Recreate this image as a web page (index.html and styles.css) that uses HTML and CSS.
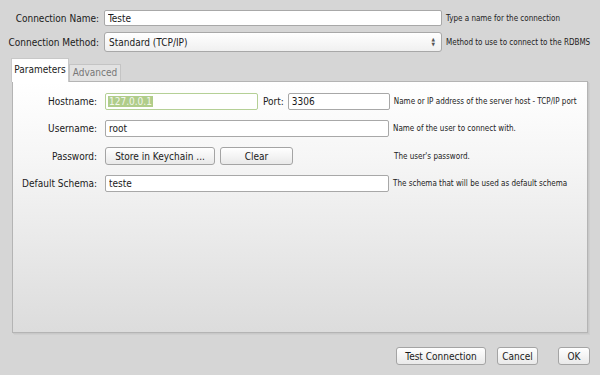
FILE: index.html
```html
<!DOCTYPE html>
<html lang="en">
<head>
  <meta charset="UTF-8">
  <title>Connection</title>
  <link rel="stylesheet" href="styles.css">
</head>
<body>

  <div class="dialog">
    <div class="row first">
      <label class="label">Connection Name:</label>
      <input type="text" class="field wide" value="Teste">
      <span class="hint">Type a name for the connection</span>
    </div>
    <div class="row">
      <label class="label">Connection Method:</label>
      <div class="select wide">
        <span>Standard (TCP/IP)</span>
        <span class="arrows"><i>&#9650;</i><i>&#9660;</i></span>
      </div>
      <span class="hint">Method to use to connect to the RDBMS</span>
    </div>

    <div class="tabs">
      <div class="tab active">Parameters</div>
      <div class="tab">Advanced</div>
    </div>

    <div class="panel">
      <div class="prow">
        <label class="plabel">Hostname:</label>
        <div class="field host"><span class="sel">127.0.0.1</span></div>
        <label class="port-label">Port:</label>
        <input type="text" class="field port" value="3306">
        <span class="hint">Name or IP address of the server host - TCP/IP port</span>
      </div>
      <div class="prow">
        <label class="plabel">Username:</label>
        <input type="text" class="field long" value="root">
        <span class="hint">Name of the user to connect with.</span>
      </div>
      <div class="prow">
        <label class="plabel">Password:</label>
        <button class="btn keychain">Store in Keychain ...</button>
        <button class="btn clear">Clear</button>
        <span class="hint pw-hint">The user's password.</span>
      </div>
      <div class="prow">
        <label class="plabel">Default Schema:</label>
        <input type="text" class="field long" value="teste">
        <span class="hint">The schema that will be used as default schema</span>
      </div>
    </div>

    <div class="actions">
      <button class="btn test">Test Connection</button>
      <button class="btn cancel">Cancel</button>
      <button class="btn ok">OK</button>
    </div>
  </div>

</body>
</html>
```

FILE: styles.css
```css
body {
  margin: 0;
  background-color: #d6d6d6;
  font-family: "DejaVu Sans Condensed", "DejaVu Sans", sans-serif;
  font-size: 10px;
  color: #1a1a1a;
  width: 600px;
  height: 375px;
  overflow: hidden;
  white-space: nowrap;
}

.dialog {
  padding-top: 10px;
}

.row {
  display: flex;
  align-items: center;
  margin-bottom: 6px;
}

.label {
  width: 104px;
  flex-shrink: 0;
  text-align: right;
  padding-right: 5px;
  box-sizing: border-box;
}

.field {
  font-family: inherit;
  font-size: 10px;
  height: 17px;
  padding: 0 3px;
  border: 1px solid #a8a8a8;
  border-radius: 2px;
  background: #fff;
  box-sizing: border-box;
  color: #1a1a1a;
  display: flex;
  align-items: center;
  flex-shrink: 0;
}

.wide {
  width: 338px;
}

.row.first .field {
  height: 16px;
}

.select {
  height: 20px;
  border: 1px solid #a8a8a8;
  border-radius: 3px;
  background: linear-gradient(#ffffff, #f0f0f0);
  box-sizing: border-box;
  display: flex;
  align-items: center;
  justify-content: space-between;
  padding: 0 6px 0 4px;
  flex-shrink: 0;
}

.arrows {
  display: flex;
  flex-direction: column;
  font-size: 5px;
  line-height: 5px;
  color: #555;
}

.arrows i {
  font-style: normal;
}

.hint {
  font-size: 8px;
  margin-left: 4px;
  color: #222;
}

.tabs {
  display: flex;
  align-items: flex-end;
  margin: 5px 0 0 11px;
  height: 23px;
}

.tab {
  width: 52px;
  text-align: center;
  height: 17px;
  line-height: 16px;
  border: 1px solid #c4c4c4;
  border-bottom: none;
  background: #e2e2e2;
  color: #777;
  box-sizing: border-box;
}

.tab.active {
  width: 58px;
  height: 24px;
  line-height: 22px;
  background: #fff;
  color: #1a1a1a;
  border-color: #c8c8c8;
  position: relative;
  z-index: 1;
  margin-bottom: -1px;
}

.panel {
  margin: 0 12px 0 12px;
  height: 252px;
  border: 1px solid #b4b4b4;
  background: linear-gradient(#ffffff, #f6f6f6 30%, #dcdcdc);
  box-shadow: 1px 1px 0 #c8c8c8, 2px 2px 0 #cfcfcf;
  box-sizing: border-box;
  padding-top: 11px;
}

.prow {
  display: flex;
  align-items: center;
  height: 17px;
  margin-bottom: 10px;
}

.prow:nth-child(3) {
  height: 18px;
  margin-top: 1px;
}

.plabel {
  width: 88px;
  flex-shrink: 0;
  text-align: right;
  padding-right: 4px;
  box-sizing: border-box;
  margin-right: 4px;
}

.host {
  width: 153px;
  border-color: #b5d096;
}

.sel {
  background: #b0cd8a;
  color: #f2f6ec;
  padding: 0 1px;
  margin-left: -1px;
}

.port-label {
  margin: 0 4px 0 5px;
}

.port {
  width: 102px;
}

.long {
  width: 284px;
}

.btn {
  font-family: inherit;
  font-size: 10px;
  color: #1a1a1a;
  height: 18px;
  padding: 0;
  border: 1px solid #a4a4a4;
  border-radius: 3px;
  background: linear-gradient(#ffffff, #e9e9e9);
  box-sizing: border-box;
  flex-shrink: 0;
}

.keychain {
  width: 110px;
}

.clear {
  width: 73px;
  margin-left: 5px;
}

.pw-hint {
  margin-left: 101px;
}

.actions {
  display: flex;
  justify-content: flex-end;
  margin: 14px 10px 0 0;
  gap: 11px;
}

.test {
  width: 90px;
}

.cancel {
  width: 41px;
  margin-right: 9px;
}

.ok {
  width: 32px;
}
```
